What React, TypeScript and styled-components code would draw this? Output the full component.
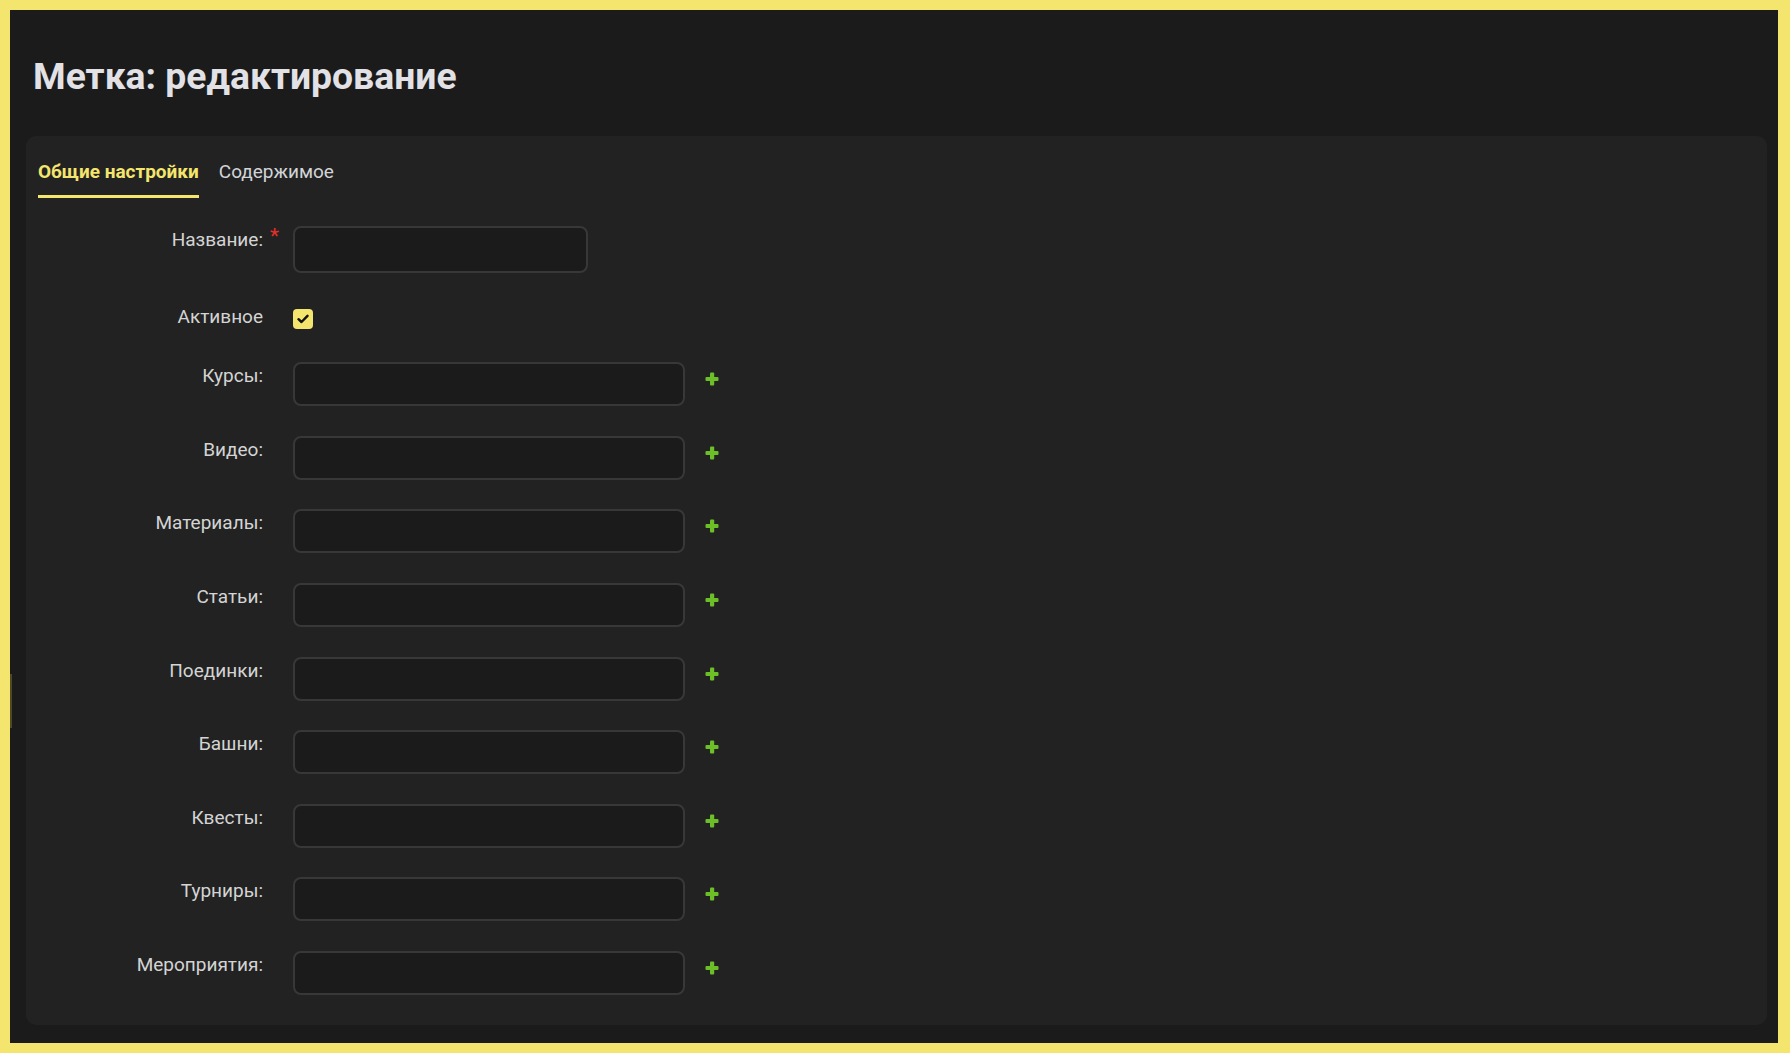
import React, { useState } from "react";
import styled, { createGlobalStyle } from "styled-components";

const GlobalStyle = createGlobalStyle`
  html, body {
    margin: 0;
    padding: 0;
    background: #f4e56e;
    font-family: Roboto, "Noto Sans", "Liberation Sans", sans-serif;
  }
  * {
    box-sizing: border-box;
  }
`;

const Frame = styled.div`
  padding: 10px 12px 10px 10px;
`;

const Panel = styled.div`
  position: relative;
  height: 1033px;
  display: flex;
  flex-direction: column;
  padding: 0 11px 18px 16px;
  background: #1b1b1b;
`;

const EdgeHandle = styled.div`
  position: absolute;
  left: 0;
  top: 664px;
  width: 2px;
  height: 54px;
  background: #4f4824;
`;

const Title = styled.h1`
  margin: 43px 0 37px 7px;
  font-size: 37.3px;
  line-height: 46px;
  font-weight: 700;
  color: #e2e2e6;
`;

const Card = styled.div`
  flex: 1;
  display: flex;
  flex-direction: column;
  padding: 14px 12px 0;
  background: #222222;
  border-radius: 10px;
`;

const TabBar = styled.div`
  display: flex;
  gap: 20px;
`;

const Tab = styled.button<{ $active?: boolean }>`
  padding: 11px 0 12px;
  border: none;
  border-bottom: 3px solid ${(p) => (p.$active ? "#f4e56e" : "transparent")};
  background: none;
  font-family: inherit;
  font-size: 19px;
  line-height: 22px;
  font-weight: ${(p) => (p.$active ? 700 : 400)};
  color: ${(p) => (p.$active ? "#f4e56e" : "#d2d4d8")};
  cursor: pointer;
`;

const Form = styled.div`
  display: flex;
  flex-direction: column;
  gap: 29.6px;
  margin-top: 28px;
`;

const Row = styled.div<{ $minHeight?: number }>`
  display: grid;
  grid-template-columns: 225px auto;
  column-gap: 30px;
  align-items: start;
  min-height: ${(p) => (p.$minHeight ? `${p.$minHeight}px` : "0")};
`;

const Label = styled.label`
  position: relative;
  padding-top: 3px;
  text-align: right;
  font-size: 19px;
  line-height: 22px;
  color: #d4d4d4;
`;

const Required = styled.span`
  position: absolute;
  right: -16px;
  top: 0;
  font-size: 21px;
  line-height: 21px;
  color: #e5302a;
`;

const Control = styled.div`
  display: flex;
  align-items: flex-start;
  gap: 20px;
`;

const TextInput = styled.input<{ $wide?: boolean }>`
  width: ${(p) => (p.$wide ? "392px" : "295px")};
  height: ${(p) => (p.$wide ? "44px" : "47px")};
  padding: 0 12px;
  background: #1b1b1b;
  border: 2px solid #383838;
  border-radius: 8px;
  color: #e0e0e0;
  font-family: inherit;
  font-size: 17px;
  outline: none;
`;

const CheckBox = styled.span`
  display: flex;
  align-items: center;
  justify-content: center;
  width: 20px;
  height: 20px;
  margin-top: 6px;
  border-radius: 4px;
  background: #f4e56e;
  cursor: pointer;
`;

const AddButton = styled.button`
  display: flex;
  margin-top: 10px;
  padding: 0;
  border: none;
  background: none;
  color: #6dbf28;
  cursor: pointer;
`;

const PlusIcon = () => (
  <svg width="14" height="14" viewBox="0 0 14 14">
    <rect x="5" y="0.5" width="4.2" height="13" rx="1" fill="currentColor" />
    <rect x="0.5" y="4.9" width="13" height="4.2" rx="1" fill="currentColor" />
  </svg>
);

const relations = [
  "Курсы:",
  "Видео:",
  "Материалы:",
  "Статьи:",
  "Поединки:",
  "Башни:",
  "Квесты:",
  "Турниры:",
  "Мероприятия:",
];

export default function App() {
  const [tab, setTab] = useState(0);
  const [active, setActive] = useState(true);

  return (
    <Frame>
      <GlobalStyle />
      <Panel>
        <EdgeHandle />
        <Title>Метка: редактирование</Title>
        <Card>
          <TabBar>
            <Tab $active={tab === 0} onClick={() => setTab(0)}>
              Общие настройки
            </Tab>
            <Tab $active={tab === 1} onClick={() => setTab(1)}>
              Содержимое
            </Tab>
          </TabBar>
          <Form>
            <Row>
              <Label>
                Название:<Required>*</Required>
              </Label>
              <Control>
                <TextInput type="text" />
              </Control>
            </Row>
            <Row $minHeight={30}>
              <Label>Активное</Label>
              <Control>
                <CheckBox onClick={() => setActive(!active)}>
                  {active && (
                    <svg width="12" height="10" viewBox="0 0 12 10">
                      <path d="M1.5 5.2 L4.5 8 L10.5 1.8" fill="none" stroke="#111" strokeWidth="2.4" strokeLinecap="round" strokeLinejoin="round" />
                    </svg>
                  )}
                </CheckBox>
              </Control>
            </Row>
            {relations.map((name) => (
              <Row key={name}>
                <Label>{name}</Label>
                <Control>
                  <TextInput type="text" $wide />
                  <AddButton>
                    <PlusIcon />
                  </AddButton>
                </Control>
              </Row>
            ))}
          </Form>
        </Card>
      </Panel>
    </Frame>
  );
}
